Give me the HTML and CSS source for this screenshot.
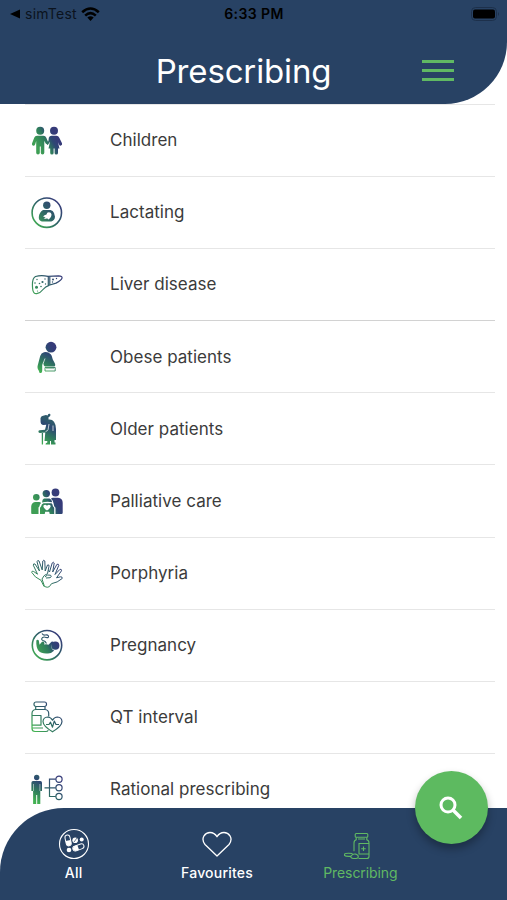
FILE: index.html
```html
<!DOCTYPE html>
<html lang="en">
<head>
<meta charset="utf-8">
<title>Prescribing</title>
<link rel="stylesheet" href="styles.css">
</head>
<body>
<svg class="defs" width="0" height="0" aria-hidden="true">
  <defs>
    <linearGradient id="g" gradientUnits="userSpaceOnUse" x1="3" y1="29" x2="27" y2="5">
      <stop offset="0" stop-color="#43b252"/><stop offset=".5" stop-color="#2d6665"/><stop offset="1" stop-color="#363b79"/>
    </linearGradient>
    <linearGradient id="h" gradientUnits="userSpaceOnUse" x1="7" y1="22" x2="25" y2="12">
      <stop offset="0" stop-color="#3e9e55"/><stop offset=".45" stop-color="#2f7d5c"/><stop offset=".75" stop-color="#2d4873"/><stop offset="1" stop-color="#363b79"/>
    </linearGradient>
    <linearGradient id="v" gradientUnits="userSpaceOnUse" x1="9" y1="31" x2="20" y2="9">
      <stop offset="0" stop-color="#43b252"/><stop offset=".4" stop-color="#2f7d5c"/><stop offset=".8" stop-color="#2d4873"/><stop offset="1" stop-color="#2f5a6c"/>
    </linearGradient>
  </defs>
</svg>
<div class="app">
  <header class="header">
    <div class="status">
      <div class="status-left">
        <svg width="11" height="10" viewBox="0 0 11 10"><path d="M0 5 10 .5v9z"/></svg>
        <span class="back">simTest</span>
        <svg width="19" height="14" viewBox="0 0 19 14"><g fill="none" stroke="#000" stroke-width="2.6"><path d="M1.2 5.2Q9.5-2.2 17.8 5.2M4.2 8.6Q9.5 3.8 14.8 8.6"/></g><path d="M6.3 10.5q3.2-2.7 6.4 0L9.5 14z"/></svg>
      </div>
      <time class="time">6:33 PM</time>
      <div class="status-right"><svg width="29" height="14" viewBox="0 0 29 14"><rect x=".5" y=".5" width="25" height="13" rx="4" fill="none" stroke="#1d304b"/><rect x="2" y="2.5" width="22" height="9" rx="2"/><path d="M27 5q2 2 0 4z" fill="#1d304b"/></svg></div>
    </div>
    <div class="titlebar">
      <h1 class="title">Prescribing</h1>
      <button class="menu" aria-label="Menu"><i></i><i></i><i></i></button>
    </div>
  </header>
  <main class="list">
    <div class="row">
      <svg class="icon" viewBox="0 0 32 32" fill="url(#h)"><circle cx="9.2" cy="5.8" r="4"/><circle cx="23" cy="5.8" r="4"/><path d="M6 10.8h6.5q2 0 2.8 2l1.9 4.500q.5 2-1.200 2-1.200 0-2-2l-.7-1.500v12q0 1.700-1.800 1.700-1.700 0-1.700-1.700v-6.300h-1v6.300q0 1.700-1.800 1.700T5.200 27.800V16l-1 3.200q-.7 1.700-2 1.600Q.600 20.500 1 18.500l2.200-5.700q.8-2 2.800-2z"/><path d="M20.500 10.800h5q2 0 2.800 2l2.700 5.500q.5 1.800-1 2.300-1.400.3-2-1.200l-1-2.200 1.500 6.300H27v4.500q0 1.600-1.700 1.600t-1.700-1.600v-4.500h-1V28q0 1.600-1.700 1.600T19.200 28v-4.500h-1.700l1.500-7-1.500 2.600q-.7 1.200-1.600.8l1.600-4.400.3-2.700q.7-2 2.700-2z"/></svg>
      <span class="label">Children</span>
    </div>
    <div class="row">
      <svg class="icon" viewBox="0 0 32 32" fill="url(#g)"><circle cx="15.800" cy="15.700" r="14.700" fill="none" stroke="url(#g)" stroke-width="1.600"/><circle cx="15.800" cy="8.300" r="3.700"/><path d="M12 13h7.500q2.600.5 3.500 3l1 3.700q-.2 3.700-3.700 4.800h-9.500q-3.300-1-3-4.500.4-4.700 4.200-7z"/><path d="M12 19.500q1.300-1.600 3.500-1.900.2-2.300 2.400-2.300t2.600 2q0 3.500-3.200 5.200l-1.200-1.300q-2 1-3.400.1l2-1z" fill="#fff"/></svg>
      <span class="label">Lactating</span>
    </div>
    <div class="row">
      <svg class="icon" viewBox="0 0 32 32" fill="none" stroke="url(#g)" stroke-width="1.200"><path d="M4.500 7.500Q10 5.800 17 7.300l10.500-.5q4 .2 3.500 2.300-.5 2-6 5l-7 2.200q-3.500 1-6 4.200-2.500 3.500-6.300 4.200-3.500.3-4-4.500Q.500 9.500 4.500 7.500zM17.300 7.500v9M18.800 7.500v8.200"/><g fill="url(#g)" stroke="none"><circle cx="5.500" cy="18.300" r="1.500"/><circle cx="11.500" cy="13" r="1.100"/><circle cx="6" cy="10.500" r=".7"/><circle cx="8.500" cy="14.500" r=".8"/><circle cx="4" cy="14" r=".8"/><circle cx="14" cy="10" r=".7"/><circle cx="10" cy="17.500" r=".8"/><circle cx="14.500" cy="15" r=".7"/><circle cx="6.500" cy="22" r=".6"/><circle cx="22" cy="10.500" r="1"/><circle cx="25.500" cy="9.500" r=".7"/><circle cx="21.500" cy="13" r=".7"/></g></svg>
      <span class="label">Liver disease</span>
    </div>
    <div class="row strong">
      <svg class="icon" viewBox="0 0 32 32"><circle cx="20" cy="6.200" r="5.400" fill="url(#h)"/><g fill="url(#v)"><path d="M13 11.300q4-.8 6.700 1.900c1.500 1.500 1.300 3.200 2.100 5.200l2 3.800q1 2.500-.3 3.300H14q-1.700-.8-1.500-3l-.3-1.500-1 3v6q-.3 2.500-2.500 2.200L7.700 29.500q-1.700-2-1-5l2.500-9.500q.9-3 3.800-3.700z"/><path d="M14 26.500h10.200V30H14zm2 0v1.600m2-1.600v1.600m2-1.600v1.600m2-1.600v1.600" fill="none" stroke="url(#v)" stroke-width=".9"/><path d="M14 17.500l-1.700 4.500" fill="none" stroke="#fff" stroke-width=".7"/></g></svg>
      <span class="label">Obese patients</span>
    </div>
    <div class="row">
      <svg class="icon" viewBox="0 0 32 32" fill="url(#v)"><path d="M9.500 5Q10 2.700 13 2.500q2-.8 3.700 0 .2-2.200 2-1.700 1.600.8.300 2.400l-1.500 1v2.300q3.500-.5 5.500 2.300 2 3 2 7.200v11h-1.500v2.500h1v2H20V28h-1v3.500h-4.500q-.2-1.700 1.800-2V28h-2.800l.8-8.500-5.500.4q-1.500-.3-1.400-1.500.2-1 1.300-1.100l5.300-.6 1.300-5-3 .2q-2.500.3-2.700-2.700z"/><path d="M11.400 20v11.500" stroke="url(#v)" stroke-width="1.300"/><path d="M18 11l-.9 5.500q-.5 1.600-2.500 2M22 12.500v5.500" fill="none" stroke="#fff" stroke-width=".7"/></svg>
      <span class="label">Older patients</span>
    </div>
    <div class="row">
      <svg class="icon" viewBox="0 0 32 32" fill="url(#h)"><circle cx="5.300" cy="12.200" r="3.300"/><circle cx="15.300" cy="8.600" r="3.700"/><circle cx="24.500" cy="7.500" r="3.900"/><path d="M4 17h4q1.500 0 2 1-1.500 1.200-1.500 3.300l-1 1.200V29H1q-.8 0-.8-1v-6.500Q.500 17.500 4 17zM13 13.500h5.500q2.200.5 2.700 3.700-5-1.200-10.200.3.300-3.500 2-4zM22 12.800h5q4.700.6 4.700 5v10q0 1.200-1.200 1.200h-6v-6.300l-1.300-1.500-.6-2.700q-.6-3.700-2.600-4.700.6-1 2-1z"/><path d="M12.500 18.300h8q1.300.8 1.400 3l1.300 1.500V29h-4.500l-.5-2.200h-4l-.5 2.200H9v-6.200l1.200-1.500q.1-2.200 2.300-3z"/><path d="M16 25.500q-4.500-2.700-3.500-5 1.700-1.800 3.500.3 1.800-2.100 3.500-.3 1 2.300-3.500 5z" fill="#fff"/></svg>
      <span class="label">Palliative care</span>
    </div>
    <div class="row">
      <svg class="icon" viewBox="0 0 32 32" fill="none" stroke="url(#g)" stroke-width="1" stroke-linejoin="round"><path d="M13 29.500 10 23.300Q3.500 20.500.7 15.300q0-1.800 2-.8l3.800 2.700-4.200-9q0-2 1.700-1.200l4.500 7L6 4.700q.4-1.800 2-.8l3.200 9L11.800 4q1-1.600 2 0l.4 10L16.500 8q1.800-.7 1.500 1.200l-1.500 7.500M13.500 29.500q3 1.400 4.800.2l2.200-3q6-1 10.700-5.200.4-1.900-1.700-1.700l-4 1 5-7q.2-1.900-1.500-1.500L24 17.500l3.800-9.200q-.3-1.800-1.900-.9L21.700 15l1.500-9q-.8-1.600-2 0l-2.700 9-1-1.600"/><path d="M16.500 16.700q-4 1.200-5.500 5.300l2.500 7.500M14 20q2-3 5.500-1.800 1.900 1.500-.5 2.500l-4 .3"/></svg>
      <span class="label">Porphyria</span>
    </div>
    <div class="row">
      <svg class="icon" viewBox="0 0 32 32" fill="url(#h)"><circle cx="16" cy="16.200" r="14.700" fill="none" stroke="url(#g)" stroke-width="1.600"/><circle cx="24.300" cy="16.700" r="4.100"/><path d="M5.300 11.500q1.300-1.300 2.500 0l.7 4.200 2.300-2.700q1.300-1 2.400.2.700 1.200-.2 2.300 2.500-.8 4.500.2l3-3q1.500-.6 1.900.6.100 1.100-1.900 2.600-.7 2.300.5 4 1 1.100 2.300 1.600-2.300 2.700-6.300 2.900-6.500.6-9.500-2.700-2.500-3.200-2.200-10.200z"/><path d="M15.500 14.500q-1-2.500-3.500-3-2.300-1-.7-2.700 1.700-1.300 3.700-.3 3 .6 2.500-1.500-1-1.600-3.200-1-2 .5-3.300-1.500" fill="none" stroke="url(#g)" stroke-width="1.100"/></svg>
      <span class="label">Pregnancy</span>
    </div>
    <div class="row">
      <svg class="icon" viewBox="0 0 32 32" fill="none" stroke="url(#g)" stroke-width="1.200" stroke-linejoin="round"><rect x="3" y="1" width="12.500" height="4.500" rx="2"/><path d="M4.700 5.500v3q-3.700.5-3.700 4v15q0 3 3 3h11q1.500 0 2.300-1.300M14 5.500v3q3.700.5 3.700 4v3M5 8.500h9M1 14.500h9v9.700H1M1 27h11"/><path d="M21.500 30.800Q12 25 12 20.500q.3-4.200 4.600-4.500 3.200 0 4.900 3.200 1.700-3.200 5-3.200 4.200.3 4.500 4.500 0 4.500-9.500 10.300z"/><path d="M15 23.500h3l1.500-2.300 2 5 1.800-6.200 1.700 3.500h3"/></svg>
      <span class="label">QT interval</span>
    </div>
    <div class="row">
      <svg class="icon" viewBox="0 0 32 32"><g fill="url(#v)"><circle cx="5.700" cy="4.500" r="2.700"/><path d="M2 8h7.400q1.600.2 1.600 1.700V18H9.300v13H6.200v-9h-1v9H2.100V18H.400V9.700Q.500 8.200 2 8z"/></g><path d="M2.500 11v7M8.900 11v7" stroke="#fff" stroke-width=".5"/><g fill="none" stroke="url(#g)" stroke-width="1.200"><path d="M13.500 14.800h11.300M24.800 6.200h-6.300v17.300h6.300"/><circle cx="28" cy="6.200" r="3.100"/><circle cx="28" cy="14.800" r="3.100"/><circle cx="28" cy="23.500" r="3.100"/></g></svg>
      <span class="label">Rational prescribing</span>
    </div>
  </main>
  <nav class="tabs">
    <a class="tab">
      <svg width="32" height="32" viewBox="0 0 32 32"><circle cx="16" cy="16" r="14.500" fill="none" stroke="#fff" stroke-width="1.100"/><g transform="rotate(-12 10 12)"><rect x="7.500" y="7" width="5" height="11" rx="2.500" fill="none" stroke="#fff"/><path d="M7.500 12.500h5V16q-2.500 4-5 0z" fill="#fff"/></g><g fill="#fff"><circle cx="17.200" cy="12.200" r="2.800"/><circle cx="23.700" cy="11.500" r="2"/><circle cx="11" cy="22" r="2.300"/></g><path d="m16 14 3-4" stroke="#284262" stroke-width=".7"/><g transform="rotate(-20 20 19)"><rect x="14.500" y="17" width="11.500" height="5" rx="2.500" fill="none" stroke="#fff"/><path d="M20 17v5h-3.500q-4-2.500 0-5z" fill="#fff"/></g></svg>
      <span>All</span>
    </a>
    <a class="tab">
      <svg width="32" height="32" viewBox="0 0 32 32"><path d="M16 28 4 16.500Q.500 12 3 7.800 5.200 4.500 9 4.500q4.500 0 7 4.200 2.500-4.200 7-4.200 3.800 0 6 3.300 2.500 4.200-1 8.700z" fill="none" stroke="#fff" stroke-width="1.300" stroke-linejoin="round"/></svg>
      <span>Favourites</span>
    </a>
    <a class="tab active">
      <svg width="32" height="32" viewBox="0 0 32 32" fill="none" stroke="#60b963" stroke-width="1.100"><g transform="translate(-1.500 1.500)"><rect x="12.700" y="4" width="12.600" height="3.800" rx="1"/><path d="M13.700 7.800v2.500q-2.200.6-2.200 3.200v8.300M24.300 7.800v2.500q2.200.6 2.200 3.200v13.200q0 2.300-2.300 2.300H16M26 14h-9.500v10.500H26M21 17v4.500M18.700 19.200h4.500M15.500 9.500h7"/><path d="M10 24Q2 23 1.600 25.300q.7 1.900 6.400 1.500m7-1.300q-4-2.500-6.500 1-.9 2 2.500 2.500 5 .3 4.800-2-.3-2.200-3.300-2.500"/></g></svg>
      <span>Prescribing</span>
    </a>
  </nav>
  <button class="fab" aria-label="Search"><svg width="24" height="24" viewBox="0 0 24 24" fill="none" stroke="#fff" stroke-width="3"><circle cx="9" cy="9" r="7"/><path d="m14 14 8 8" stroke-width="3.600"/></svg></button>
</div>
</body>
</html>
```
FILE: styles.css
```css
* { box-sizing: border-box; }
body { margin: 0; background: #fff; font-family: Inter, sans-serif; }
.defs { position: absolute; }
.app {
  position: relative;
  display: flex;
  flex-direction: column;
  height: 900px;
  overflow: hidden;
}
.header {
  flex: none;
  height: 104px;
  background: #284264;
  border-bottom-right-radius: 62px;
}
.status {
  display: grid;
  grid-template-columns: 1fr auto 1fr;
  align-items: center;
  height: 27px;
  padding: 0 7px 0 10px;
  font-size: 14px;
}
.status-left { display: flex; align-items: center; gap: 4px; }
.back { letter-spacing: .25px; color: #0b131e; }
.status-right { display: flex; justify-content: flex-end; }
.time { margin-right: 2px; font-weight: 600; letter-spacing: .4px; }
.titlebar {
  display: grid;
  grid-template-columns: 1fr auto 1fr;
  align-items: center;
  height: 87px;
  padding: 0 53px 0 33px;
}
.title {
  grid-column: 2;
  margin: 0;
  font-size: 33px;
  font-weight: 400;
  letter-spacing: -.15px;
  color: #fff;
}
.menu {
  justify-self: end;
  display: grid;
  gap: 6.8px;
  width: 32px;
  padding: 0;
  border: 0;
  background: none;
}
.menu i { height: 2.300px; background: #60b963; }
.list {
  flex: 1;
  min-height: 0;
  overflow: hidden;
  padding: 0 12px 0 25px;
}
.row {
  display: flex;
  align-items: center;
  gap: 47px;
  height: 72.1px;
  padding-left: 6px;
  border-top: 1px solid #e6e6e6;
}
.strong { border-top-color: #d2d2d2; }
.icon { flex: none; width: 32px; height: 32px; }
.label { font-size: 17px; letter-spacing: .03px; color: #3b3b3b; }
.row:nth-child(-n+3) .label { margin-top: -1px; }
.tabs {
  flex: none;
  display: flex;
  height: 92px;
  padding: 20px 75px 0 2px;
  background: #284264;
  border-top-left-radius: 64px;
}
.tab {
  flex: 1;
  display: flex;
  flex-direction: column;
  align-items: center;
  gap: 4px;
  font-size: 14px;
  line-height: 18px;
  font-weight: 500;
  letter-spacing: .2px;
  color: #fff;
}
.active { color: #60b963; font-weight: 400; letter-spacing: -.1px; }
.fab {
  position: absolute;
  left: 414.500px;
  top: 771px;
  display: grid;
  place-items: center;
  width: 73px;
  height: 73px;
  padding: 0 1px 0 0;
  border: 0;
  border-radius: 50%;
  background: #5dba60;
  box-shadow: 0 5px 9px rgba(0, 0, 0, .3);
}
```
